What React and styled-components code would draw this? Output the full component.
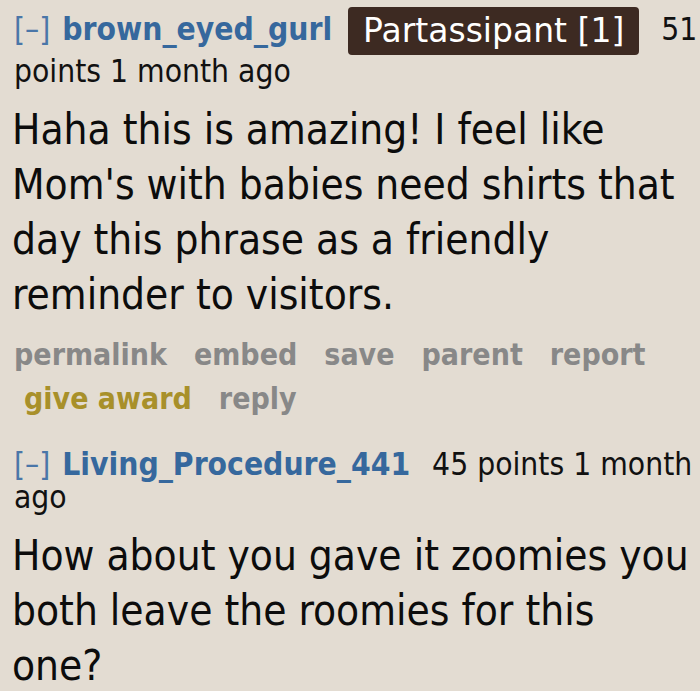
import styled, { createGlobalStyle } from 'styled-components';

const GlobalStyle = createGlobalStyle`
    html, body {
        margin: 0;
        padding: 0;
        background: #e3dcd2;
    }
    body {
        font-family: "DejaVu Sans Condensed", "DejaVu Sans", sans-serif;
        color: #111;
    }
`;

const comments = [
    {
        author: 'brown_eyed_gurl',
        flair: 'Partassipant [1]',
        points: 51,
        age: '1 month ago',
        body: "Haha this is amazing! I feel like Mom's with babies need shirts that day this phrase as a friendly reminder to visitors.",
        actions: ['permalink', 'embed', 'save', 'parent', 'report', 'give award', 'reply']
    },
    {
        author: 'Living_Procedure_441',
        points: 45,
        age: '1 month ago',
        body: 'How about you gave it zoomies you both leave the roomies for this one?'
    }
];

const Comment = ({ author, flair, points, age, body, actions }) => {
    return (
        <Entry>
            <Tagline>
                <Toggle>[–]</Toggle> <Author>{author}</Author>
                {flair && <Flair>{flair}</Flair>}
                <Score>{points} points</Score> {age}
            </Tagline>
            <Body>{body}</Body>
            {actions && (
                <Actions>
                    {actions.map((a) => (
                        <Action key={a} $award={a === 'give award'}>{a}</Action>
                    ))}
                </Actions>
            )}
        </Entry>
    );
};

const App = () => {
    return (
        <>
            <GlobalStyle />
            <Page>
                {comments.map((c) => (
                    <Comment key={c.author} {...c} />
                ))}
            </Page>
        </>
    );
};

export default App;

const Page = styled.div`
    width: 688px;
    padding: 7px 0 0 12px;
    height: 684px;
    overflow: hidden;
`;

const Entry = styled.div`
    margin-bottom: 30px;
`;

const Tagline = styled.div`
    font-size: 31.5px;
    line-height: 33px;
    padding-left: 2px;
    color: #111;
`;

const Toggle = styled.span`
    color: #4a76a8;
    font-weight: 400;
    margin-right: 3px;
`;

const Author = styled.span`
    color: #36689d;
    font-weight: 700;
`;

const Flair = styled.span`
    display: inline-block;
    margin-left: 16px;
    padding: 0 15px;
    background: #3d2a22;
    color: #fff;
    border-radius: 4px;
    font-family: "DejaVu Sans", sans-serif;
    font-size: 33px;
    line-height: 48px;
    vertical-align: middle;
`;

const Score = styled.span`
    margin-left: 22px;
`;

const Body = styled.div`
    width: 680px;
    font-size: 42px;
    line-height: 55px;
    margin-top: 14px;
    color: #0c0c0c;
`;

const Actions = styled.ul`
    display: flex;
    flex-wrap: wrap;
    column-gap: 17px;
    row-gap: 6px;
    list-style: none;
    margin: 14px 0 0;
    padding: 0 0 0 2px;
`;

const Action = styled.li`
    font-size: 30px;
    line-height: 38px;
    font-weight: 700;
    color: ${(p) => (p.$award ? '#a8902a' : '#888888')};
    padding-left: 10px;

    &:first-child {
        padding-left: 0;
    }
`;
